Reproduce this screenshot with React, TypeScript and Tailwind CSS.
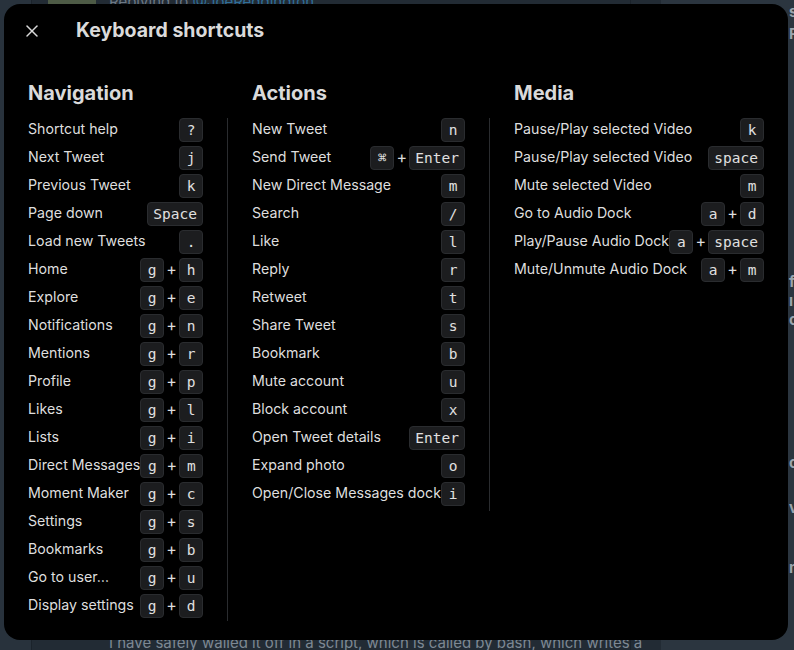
import { X } from 'lucide-react'

type Row = { label: string; keys: string[] }

const navigation: Row[] = [
  { label: 'Shortcut help', keys: ['?'] },
  { label: 'Next Tweet', keys: ['j'] },
  { label: 'Previous Tweet', keys: ['k'] },
  { label: 'Page down', keys: ['Space'] },
  { label: 'Load new Tweets', keys: ['.'] },
  { label: 'Home', keys: ['g', 'h'] },
  { label: 'Explore', keys: ['g', 'e'] },
  { label: 'Notifications', keys: ['g', 'n'] },
  { label: 'Mentions', keys: ['g', 'r'] },
  { label: 'Profile', keys: ['g', 'p'] },
  { label: 'Likes', keys: ['g', 'l'] },
  { label: 'Lists', keys: ['g', 'i'] },
  { label: 'Direct Messages', keys: ['g', 'm'] },
  { label: 'Moment Maker', keys: ['g', 'c'] },
  { label: 'Settings', keys: ['g', 's'] },
  { label: 'Bookmarks', keys: ['g', 'b'] },
  { label: 'Go to user…', keys: ['g', 'u'] },
  { label: 'Display settings', keys: ['g', 'd'] },
]

const actions: Row[] = [
  { label: 'New Tweet', keys: ['n'] },
  { label: 'Send Tweet', keys: ['⌘', 'Enter'] },
  { label: 'New Direct Message', keys: ['m'] },
  { label: 'Search', keys: ['/'] },
  { label: 'Like', keys: ['l'] },
  { label: 'Reply', keys: ['r'] },
  { label: 'Retweet', keys: ['t'] },
  { label: 'Share Tweet', keys: ['s'] },
  { label: 'Bookmark', keys: ['b'] },
  { label: 'Mute account', keys: ['u'] },
  { label: 'Block account', keys: ['x'] },
  { label: 'Open Tweet details', keys: ['Enter'] },
  { label: 'Expand photo', keys: ['o'] },
  { label: 'Open/Close Messages dock', keys: ['i'] },
]

const media: Row[] = [
  { label: 'Pause/Play selected Video', keys: ['k'] },
  { label: 'Pause/Play selected Video', keys: ['space'] },
  { label: 'Mute selected Video', keys: ['m'] },
  { label: 'Go to Audio Dock', keys: ['a', 'd'] },
  { label: 'Play/Pause Audio Dock', keys: ['a', 'space'] },
  { label: 'Mute/Unmute Audio Dock', keys: ['a', 'm'] },
]

function Key({ k }: { k: string }) {
  return (
    <span className="h-6 min-w-6 px-[5px] flex items-center justify-center rounded-[4px] bg-[#1c1d1f] border border-[#2a2c2f] text-[#e0e0e0] text-[14.5px] font-['DejaVu_Sans_Mono',monospace] leading-none">
      {k}
    </span>
  )
}

function Section({ title, rows, width }: { title: string; rows: Row[]; width: string }) {
  return (
    <div className={width}>
      <h2 className="text-[20px] font-bold text-[#dadada] leading-6 mb-[11px]">{title}</h2>
      <div className="flex flex-col">
        {rows.map((r, i) => (
          <div key={i} className="h-7 flex items-center justify-between">
            <span className="text-[14.2px] text-[#dedede] whitespace-nowrap -mt-[3px]">{r.label}</span>
            <span className="flex items-center">
              {r.keys.map((k, j) => (
                <span key={j} className="flex items-center">
                  {j > 0 && <span className="w-[15px] text-center text-[#dedede] text-[16px] leading-none -mt-[2px]">+</span>}
                  <Key k={k} />
                </span>
              ))}
            </span>
          </div>
        ))}
      </div>
    </div>
  )
}

export default function App() {
  return (
    <div className="relative w-[794px] h-[650px] overflow-hidden bg-[#28323c] font-['Inter',sans-serif]">
      {/* Background page (dimmed) */}
      <div className="absolute inset-0 flex">
        <div className="w-[31px] bg-[#28323c]" />
        <div className="w-[599px] bg-[#222b34] border-l border-[#1b232b] relative">
          <div className="absolute left-[16px] -top-[8px] w-[48px] h-[12px] bg-[#4d5a45]" />
          <div className="absolute left-[77px] -top-[9px] text-[15px] text-[#6c7884]">
            Replying to <span className="text-[#2f6f9a]">@JoeReddington</span>
          </div>
          <div className="absolute left-[77px] top-[632px] text-[15px] text-[#7d8893] whitespace-nowrap">
            I have safely walled it off in a script, which is called by bash, which writes a
          </div>
        </div>
        <div className="w-[31px] bg-[#222b34] border-l border-[#1b232b]" />
        <div className="flex-1 bg-[#2b353f] relative text-[#9aa4ad] text-[15px] font-bold leading-none">
          <span className="absolute left-[128px] top-[4px]">s</span>
          <span className="absolute left-[128px] top-[26px]">P</span>
          <span className="absolute left-[128px] top-[274px]">f</span>
          <span className="absolute left-[128px] top-[293px]">ı</span>
          <span className="absolute left-[128px] top-[312px]">c</span>
          <span className="absolute left-[128px] top-[455px]">o</span>
          <span className="absolute left-[128px] top-[500px]">v</span>
          <span className="absolute left-[128px] top-[560px]">n</span>
        </div>
      </div>

      {/* Modal */}
      <div className="absolute left-[4px] top-[4px] w-[784px] h-[636px] bg-black rounded-[16px]">
        <div className="h-[53px] flex items-center pl-[16px]">
          <button className="w-[20px] h-[20px] flex items-center justify-center text-[#d9d9d9] ml-[2px]">
            <X size={20} strokeWidth={1.8} />
          </button>
          <h1 className="ml-[34px] text-[19.5px] font-bold text-[#dadada]">Keyboard shortcuts</h1>
        </div>
        <div className="flex pl-[24px] pt-[24px]">
          <Section title="Navigation" rows={navigation} width="w-[175px]" />
          <div className="mx-[24px] mt-[37px] w-px h-[503px] bg-[#2a2c2f]" />
          <Section title="Actions" rows={actions} width="w-[213px]" />
          <div className="mx-[24px] mt-[37px] w-px h-[393px] bg-[#2a2c2f]" />
          <Section title="Media" rows={media} width="w-[250px]" />
        </div>
      </div>
    </div>
  )
}
